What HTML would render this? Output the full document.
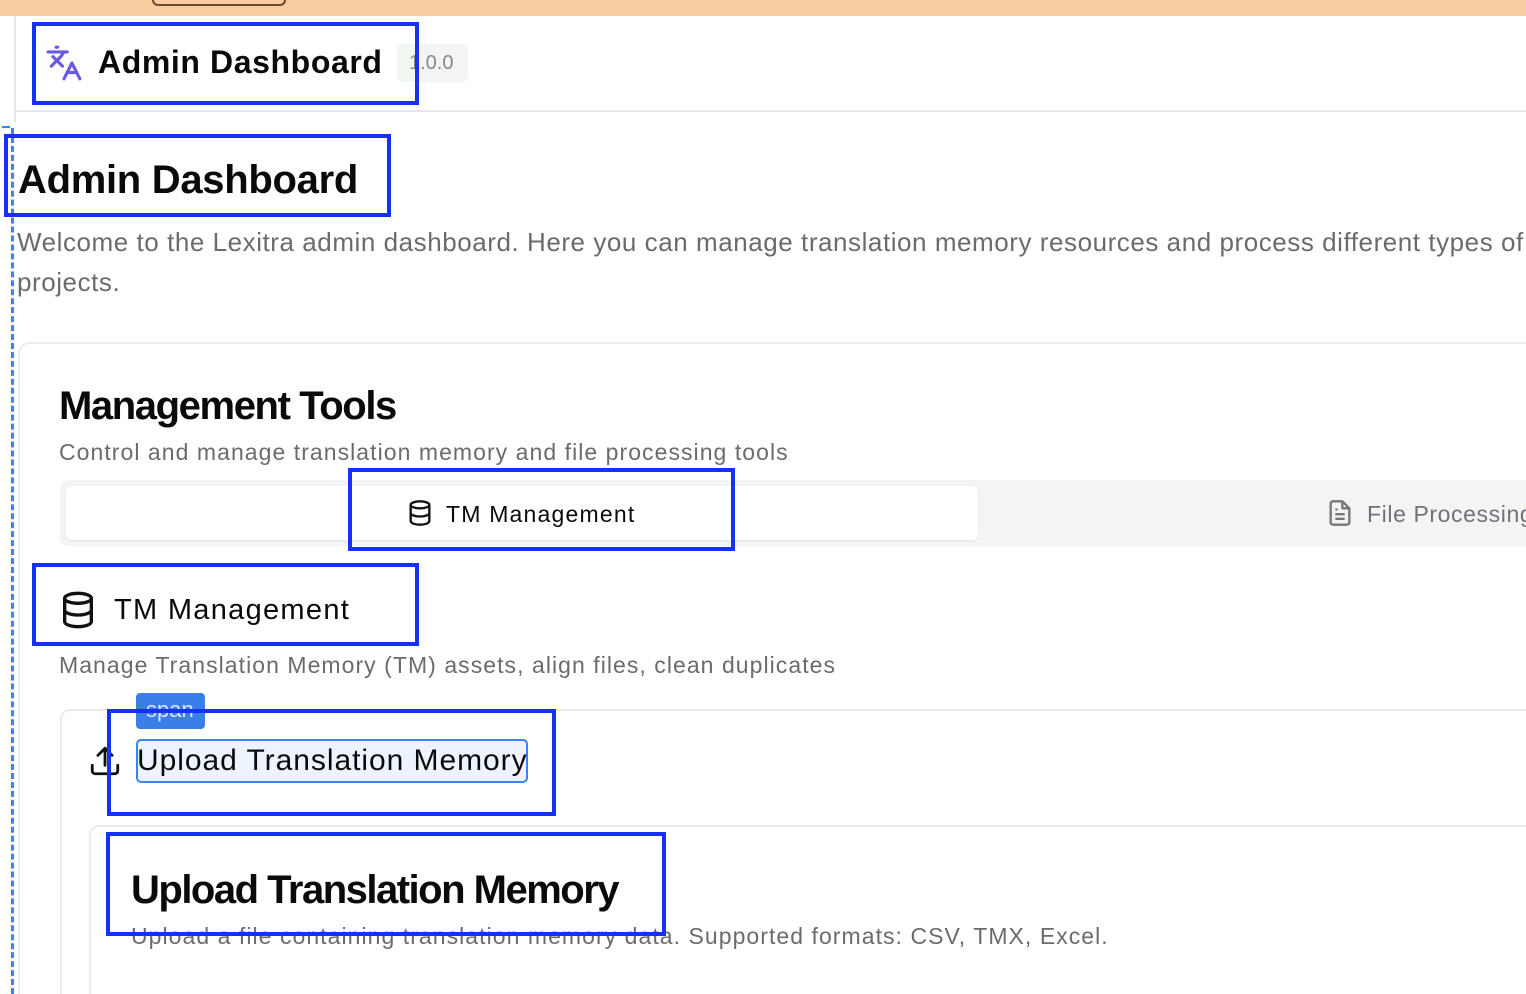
<!DOCTYPE html>
<html style="width:1526px;height:994px;overflow:hidden"><head><style>
*{box-sizing:border-box;margin:0;padding:0}
body{width:1526px;height:994px;overflow:hidden;background:#fff;font-family:"Liberation Sans",sans-serif;position:relative;color:#0a0a0a}
.a{position:absolute;white-space:nowrap}
.box{position:absolute;border:4px solid #1630f5}
</style></head><body>
<div class="a" style="left:0;top:0;width:1526px;height:16px;background:#f8cea0"></div>
<div class="a" style="left:152px;top:-10px;width:134px;height:16px;border:2px solid #6b4a2a;border-radius:6px"></div>
<div class="a" style="left:14px;top:16px;width:2px;height:106px;background:#e5e5e5"></div>
<div class="a" style="left:11px;top:128px;width:0;height:866px;border-left:3px dashed #3b82f6"></div>
<div class="a" style="left:2px;top:126px;width:8px;height:2px;background:#3b82f6"></div>
<div class="a" style="left:16px;top:110px;width:1510px;height:2px;background:#e8e8e8"></div>
<svg class="a" style="left:44px;top:44px" width="40" height="38" viewBox="0 0 24 24" fill="none" stroke="#6a5ae0" stroke-width="2" stroke-linecap="round" stroke-linejoin="round"><path d="m5 8 6 6"/><path d="m4 14 6-6 2-3"/><path d="M2 5h12"/><path d="M7 2h1"/><path d="m22 22-5-10-5 10"/><path d="M14 18h6"/></svg>
<div class="a" style="left:98px;top:44px;font-size:32px;font-weight:600;letter-spacing:0.6px">Admin Dashboard</div>
<div class="a" style="left:397px;top:44px;width:71px;height:38px;background:#f4f4f5;border-radius:6px;color:#888;font-size:20px;padding:8px 0 0 12px">1.0.0</div>
<div class="a" style="left:18px;top:158px;font-size:40px;font-weight:700;letter-spacing:-0.3px">Admin Dashboard</div>
<div class="a" style="left:17px;top:222px;font-size:26px;color:#6b6b6b;line-height:40px;letter-spacing:0.55px">Welcome to the Lexitra admin dashboard. Here you can manage translation memory resources and process different types of<br>projects.</div>
<div class="a" style="left:18px;top:342px;width:1540px;height:700px;border:2px solid #ececec;border-radius:12px"></div>
<div class="a" style="left:59px;top:384px;font-size:40px;font-weight:700;letter-spacing:-1.4px">Management Tools</div>
<div class="a" style="left:59px;top:439px;font-size:23px;color:#6b6b6b;letter-spacing:1.05px">Control and manage translation memory and file processing tools</div>
<div class="a" style="left:60px;top:480px;width:1480px;height:66px;background:#f4f4f5;border-radius:8px"></div>
<div class="a" style="left:66px;top:486px;width:912px;height:54px;background:#fff;border-radius:6px;box-shadow:0 1px 2px rgba(0,0,0,.08)"></div>
<svg class="a" style="left:406px;top:499px" width="28" height="28" viewBox="0 0 24 24" fill="none" stroke="#111" stroke-width="2"><ellipse cx="12" cy="5" rx="8" ry="3"/><path d="M4 5v14c0 1.7 3.6 3 8 3s8-1.3 8-3V5"/><path d="M4 12c0 1.7 3.6 3 8 3s8-1.3 8-3"/></svg>
<div class="a" style="left:446px;top:501px;font-size:23px;font-weight:500;letter-spacing:1.2px">TM Management</div>
<svg class="a" style="left:1326px;top:499px" width="28" height="28" viewBox="0 0 24 24" fill="none" stroke="#777" stroke-width="2" stroke-linejoin="round"><path d="M14 2H6a2 2 0 0 0-2 2v16a2 2 0 0 0 2 2h12a2 2 0 0 0 2-2V8z"/><path d="M14 2v6h6M8 13h8M8 17h8M8 9h2"/></svg>
<div class="a" style="left:1367px;top:501px;font-size:23px;color:#71717a;letter-spacing:0.6px">File Processing</div>
<svg class="a" style="left:58px;top:590px" width="40" height="40" viewBox="0 0 24 24" fill="none" stroke="#111" stroke-width="2"><ellipse cx="12" cy="5" rx="8" ry="3"/><path d="M4 5v14c0 1.7 3.6 3 8 3s8-1.3 8-3V5"/><path d="M4 12c0 1.7 3.6 3 8 3s8-1.3 8-3"/></svg>
<div class="a" style="left:114px;top:594px;font-size:29px;font-weight:500;letter-spacing:1.3px">TM Management</div>
<div class="a" style="left:59px;top:652px;font-size:23px;color:#6b6b6b;letter-spacing:1.05px">Manage Translation Memory (TM) assets, align files, clean duplicates</div>
<div class="a" style="left:60px;top:709px;width:1500px;height:320px;border:2px solid #ececec;border-radius:10px"></div>
<div class="a" style="left:136px;top:693px;width:69px;height:36px;background:#3b7ee8;border-radius:4px;color:#dbe7ff;font-size:22px;padding:4px 0 0 10px;overflow:hidden">span</div>
<svg class="a" style="left:88px;top:744px" width="34" height="34" viewBox="0 0 24 24" fill="none" stroke="#111" stroke-width="2" stroke-linecap="round" stroke-linejoin="round"><path d="M21 15v4a2 2 0 0 1-2 2H5a2 2 0 0 1-2-2v-4"/><path d="m17 8-5-5-5 5"/><path d="M12 3v12"/></svg>
<div class="a" style="left:136px;top:739px;width:392px;height:44px;background:#eef4ff;border:2px solid #3b82f6;border-radius:5px"></div>
<div class="a" style="left:137px;top:744px;font-size:30px;font-weight:500;letter-spacing:0.95px">Upload Translation Memory</div>
<div class="a" style="left:89px;top:825px;width:1470px;height:200px;border:2px solid #ececec;border-radius:10px"></div>
<div class="a" style="left:131px;top:868px;font-size:40px;font-weight:700;letter-spacing:-1.5px">Upload Translation Memory</div>
<div class="a" style="left:131px;top:923px;font-size:23px;color:#6b6b6b;letter-spacing:1.05px">Upload a file containing translation memory data. Supported formats: CSV, TMX, Excel.</div>
<div class="box" style="left:32px;top:22px;width:387px;height:83px"></div>
<div class="box" style="left:4px;top:134px;width:387px;height:83px"></div>
<div class="box" style="left:348px;top:468px;width:387px;height:83px"></div>
<div class="box" style="left:32px;top:563px;width:387px;height:83px"></div>
<div class="box" style="left:107px;top:709px;width:449px;height:107px"></div>
<div class="box" style="left:106px;top:832px;width:560px;height:104px"></div>
</body></html>
